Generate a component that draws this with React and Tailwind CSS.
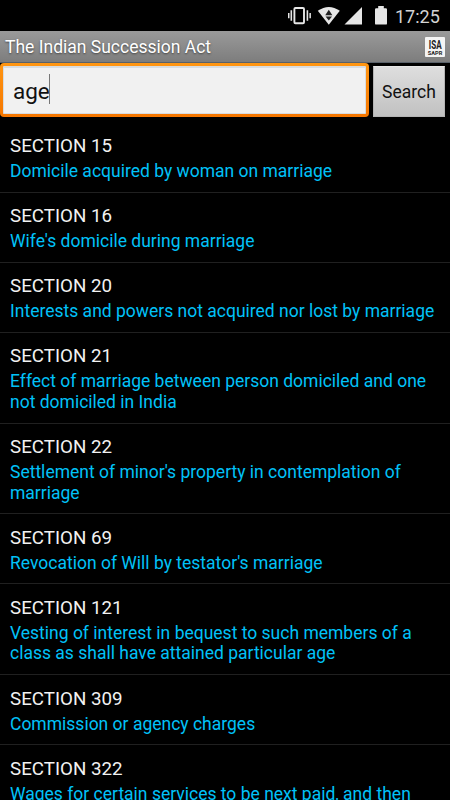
const sections = [
  ['15', ['Domicile acquired by woman on marriage']],
  ['16', ["Wife's domicile during marriage"]],
  ['20', ['Interests and powers not acquired nor lost by marriage']],
  ['21', ['Effect of marriage between person domiciled and one', 'not domiciled in India']],
  ['22', ["Settlement of minor's property in contemplation of", 'marriage']],
  ['69', ["Revocation of Will by testator's marriage"]],
  ['121', ['Vesting of interest in bequest to such members of a', 'class as shall have attained particular age']],
  ['309', ['Commission or agency charges']],
  ['322', ['Wages for certain services to be next paid, and then']],
];

function StatusBar() {
  return (
    <div className="flex h-[31px] shrink-0 items-center justify-end bg-black pr-[10px] text-[#e6e6e6]">
      <svg className="h-[31px] w-[108px]" viewBox="284 0 108 31" fill="currentColor">
        <rect x="294.4" y="8" width="9.6" height="15.2" rx="1" fill="none" stroke="currentColor" strokeWidth="1.9" />
        <path d="M290.5 10.2h1.6v10.6h-1.6zM288 13h1.5v5.2H288zM306.6 10.2h1.6v10.6h-1.6zM309.4 13h1.5v5.2h-1.5z" />
        <path d="M317.8 10.8Q328.8 3 339.8 10.8L328.8 24.7z" />
        <path d="M328.8 9.8l3.6 5.4h-7.2zM325.6 16.6h6.4l-3.2 4z" fill="#222" />
        <path d="M362 7v17.6h-17.5z" />
        <path d="M378.2 6h5.6v2.2h2q1.2 0 1.2 1.2v14q0 1.2-1.2 1.2h-9.6q-1.2 0-1.2-1.2v-14q0-1.2 1.2-1.2h2z" />
      </svg>
      <span className="ml-[3px] w-[45px] whitespace-nowrap pt-px text-[18px] leading-[31px] text-[#d4d4d4]">17:25</span>
    </div>
  );
}

function TitleBar() {
  return (
    <div className="flex h-8 shrink-0 items-center justify-between border-b border-[#59616a] bg-linear-to-b from-[#9a9a9a] to-[#7d7d7d] pl-[5px] pr-[5px]">
      <h1 className="pt-[2px] text-[17.5px] leading-[21px] text-white [text-shadow:0_1px_2px_#444]">The Indian Succession Act</h1>
      <svg className="h-5 w-5" viewBox="0 0 20 20" fill="#222" fontFamily="Roboto, sans-serif">
        <rect width="20" height="20" rx="1" fill="#f4f4f4" />
        <text x="3.8" y="11.9" fontSize="13" fontWeight="700" textLength="12.8" lengthAdjust="spacingAndGlyphs">ISA</text>
        <text x="2.8" y="18" fontSize="5.4" fontWeight="700" textLength="14.5" lengthAdjust="spacingAndGlyphs">SAPR</text>
      </svg>
    </div>
  );
}

function SearchRow() {
  return (
    <div className="flex h-[59px] shrink-0">
      <div className="h-[54px] w-[369px] rounded-[4px] bg-linear-to-b from-[#ff9612] to-[#f57600] p-[3px]">
        <div className="flex h-[48px] items-center rounded-[1px] border border-t-2 border-[#d8dce0] bg-[#f1f1f1] pl-[9px]">
          <span className="text-[22.5px] leading-[28px] text-[#111]">age</span>
          <span className="-ml-px -mt-1 h-[30px] w-px bg-[#777]" />
        </div>
      </div>
      <button className="ml-1 mt-[3px] h-[51px] w-[72px] border border-[#b4b4b4] border-t-[#e8e8e8] bg-linear-to-b from-[#dedede] to-[#c1c1c1] pt-[2px] text-[17.5px] text-[#111]">
        Search
      </button>
    </div>
  );
}

export default function App() {
  return (
    <div className="flex h-[800px] w-[450px] flex-col overflow-hidden bg-black font-[Roboto,sans-serif]">
      <StatusBar />
      <TitleBar />
      <SearchRow />
      <ul className="min-h-0 flex-1 overflow-hidden pt-[0.6px]">
        {sections.map(([number, lines]) => (
          <li key={number} className="border-b border-[#202020] pb-[10.2px] pl-[10px] pt-[12.5px]">
            <h2 className="text-[18.75px] leading-[22px] text-[#f2f2f2]">SECTION {number}</h2>
            <p className="mt-[3.9px] text-[17.5px] leading-[20.55px] text-[#00c2f8]">
              {lines.map((line) => (
                <span key={line} className="block whitespace-nowrap">{line}</span>
              ))}
            </p>
          </li>
        ))}
      </ul>
    </div>
  );
}
